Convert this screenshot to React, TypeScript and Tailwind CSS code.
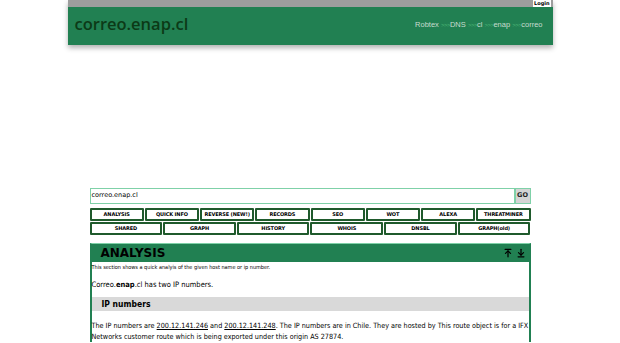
import { ArrowUpToLine, ArrowDownToLine } from "lucide-react";

const ROW1 = ["ANALYSIS", "QUICK INFO", "REVERSE (NEW!)", "RECORDS", "SEO", "WOT", "ALEXA", "THREATMINER"];
const ROW2 = ["SHARED", "GRAPH", "HISTORY", "WHOIS", "DNSBL", "GRAPH(old)"];
const CRUMBS = ["DNS", "cl", "enap", "correo"];

function NavButton({ label }: { label: string }) {
  return (
    <button className="h-[13px] flex items-center justify-center border-2 border-[#1f5a2c] rounded-[1px] bg-white text-[5px] font-bold text-black leading-none tracking-tight">
      {label}
    </button>
  );
}

export default function App() {
  return (
    <div className="w-[620px] h-[343px] overflow-hidden bg-white font-['DejaVu_Sans',sans-serif]">
      {/* header */}
      <div className="w-[485px] mx-auto shadow-[0_3px_5px_rgba(0,0,0,0.3)]">
        <div className="h-[7px] bg-[#9d9d9d] flex justify-end pr-[2px]">
          <span className="h-[7px] px-[1px] bg-white text-[5px] font-bold leading-[7px] text-black">Login</span>
        </div>
        <div className="h-[38px] bg-[#218052] flex items-center justify-between pl-[7px] pr-[10px]">
          <span className="text-[16.5px] leading-none font-semibold text-[#0c3a17] font-['Open_Sans',sans-serif] -mt-[3px]">correo.enap.cl</span>
          <span className="text-[7.5px] text-[#c8dcd0] font-['Liberation_Sans',sans-serif] -mt-[3px]">
            Robtex
            {CRUMBS.map((c) => (
              <span key={c}>
                {" "}
                <span className="text-[#4fb877] text-[6px] tracking-[-0.5px]">&gt;&gt;&gt;</span>
                {c}
              </span>
            ))}
          </span>
        </div>
      </div>

      {/* search */}
      <div className="w-[441px] mx-auto mt-[143px]">
        <div className="flex h-[16px]">
          <div className="flex-1 border border-[#7fd1a8] flex items-center px-[1px] text-[6.5px] text-black">correo.enap.cl</div>
          <div className="w-[16px] border border-[#7fd1a8] bg-[#d4d4d4] flex items-center justify-center text-[6.5px] font-bold text-[#222]">GO</div>
        </div>
        <div className="grid grid-cols-8 gap-x-[1px] mt-[4px]">
          {ROW1.map((l) => (
            <NavButton key={l} label={l} />
          ))}
        </div>
        <div className="grid grid-cols-6 gap-x-[1px] mt-[1px]">
          {ROW2.map((l) => (
            <NavButton key={l} label={l} />
          ))}
        </div>

        {/* analysis panel */}
        <div className="mt-[8px] border-x-2 border-[#218052] border-t border-t-[#7fd1a8]">
          <div className="h-[18px] bg-[#218052] flex items-center justify-between pl-[9px] pr-[3px]">
            <span className="text-[12px] font-bold text-black leading-none">ANALYSIS</span>
            <div className="flex gap-[3px] text-black">
              <ArrowUpToLine size={10} strokeWidth={3} />
              <ArrowDownToLine size={10} strokeWidth={3} />
            </div>
          </div>
          <div className="text-black font-['DejaVu_Sans_Condensed',sans-serif]">
            <p className="text-[5.5px] pt-[1px] leading-[9px]">This section shows a quick analyis of the given host name or ip number.</p>
            <p className="text-[7.5px] mt-[8px] leading-[10px]">
              Correo.<span className="font-bold">enap</span>.cl has two IP numbers.
            </p>
            <div className="mt-[7px] h-[14px] bg-[#d9d9d9] flex items-center pl-[10px] text-[8.5px] font-bold">IP numbers</div>
            <p className="text-[7.2px] leading-[11px] mt-[9px]">
              The IP numbers are <span className="underline">200.12.141.246</span> and <span className="underline">200.12.141.248</span>. The IP numbers are in Chile. They are hosted by This route object is for a IFX Networks customer route which is being exported under this origin AS 27874.
            </p>
          </div>
        </div>
      </div>
    </div>
  );
}
